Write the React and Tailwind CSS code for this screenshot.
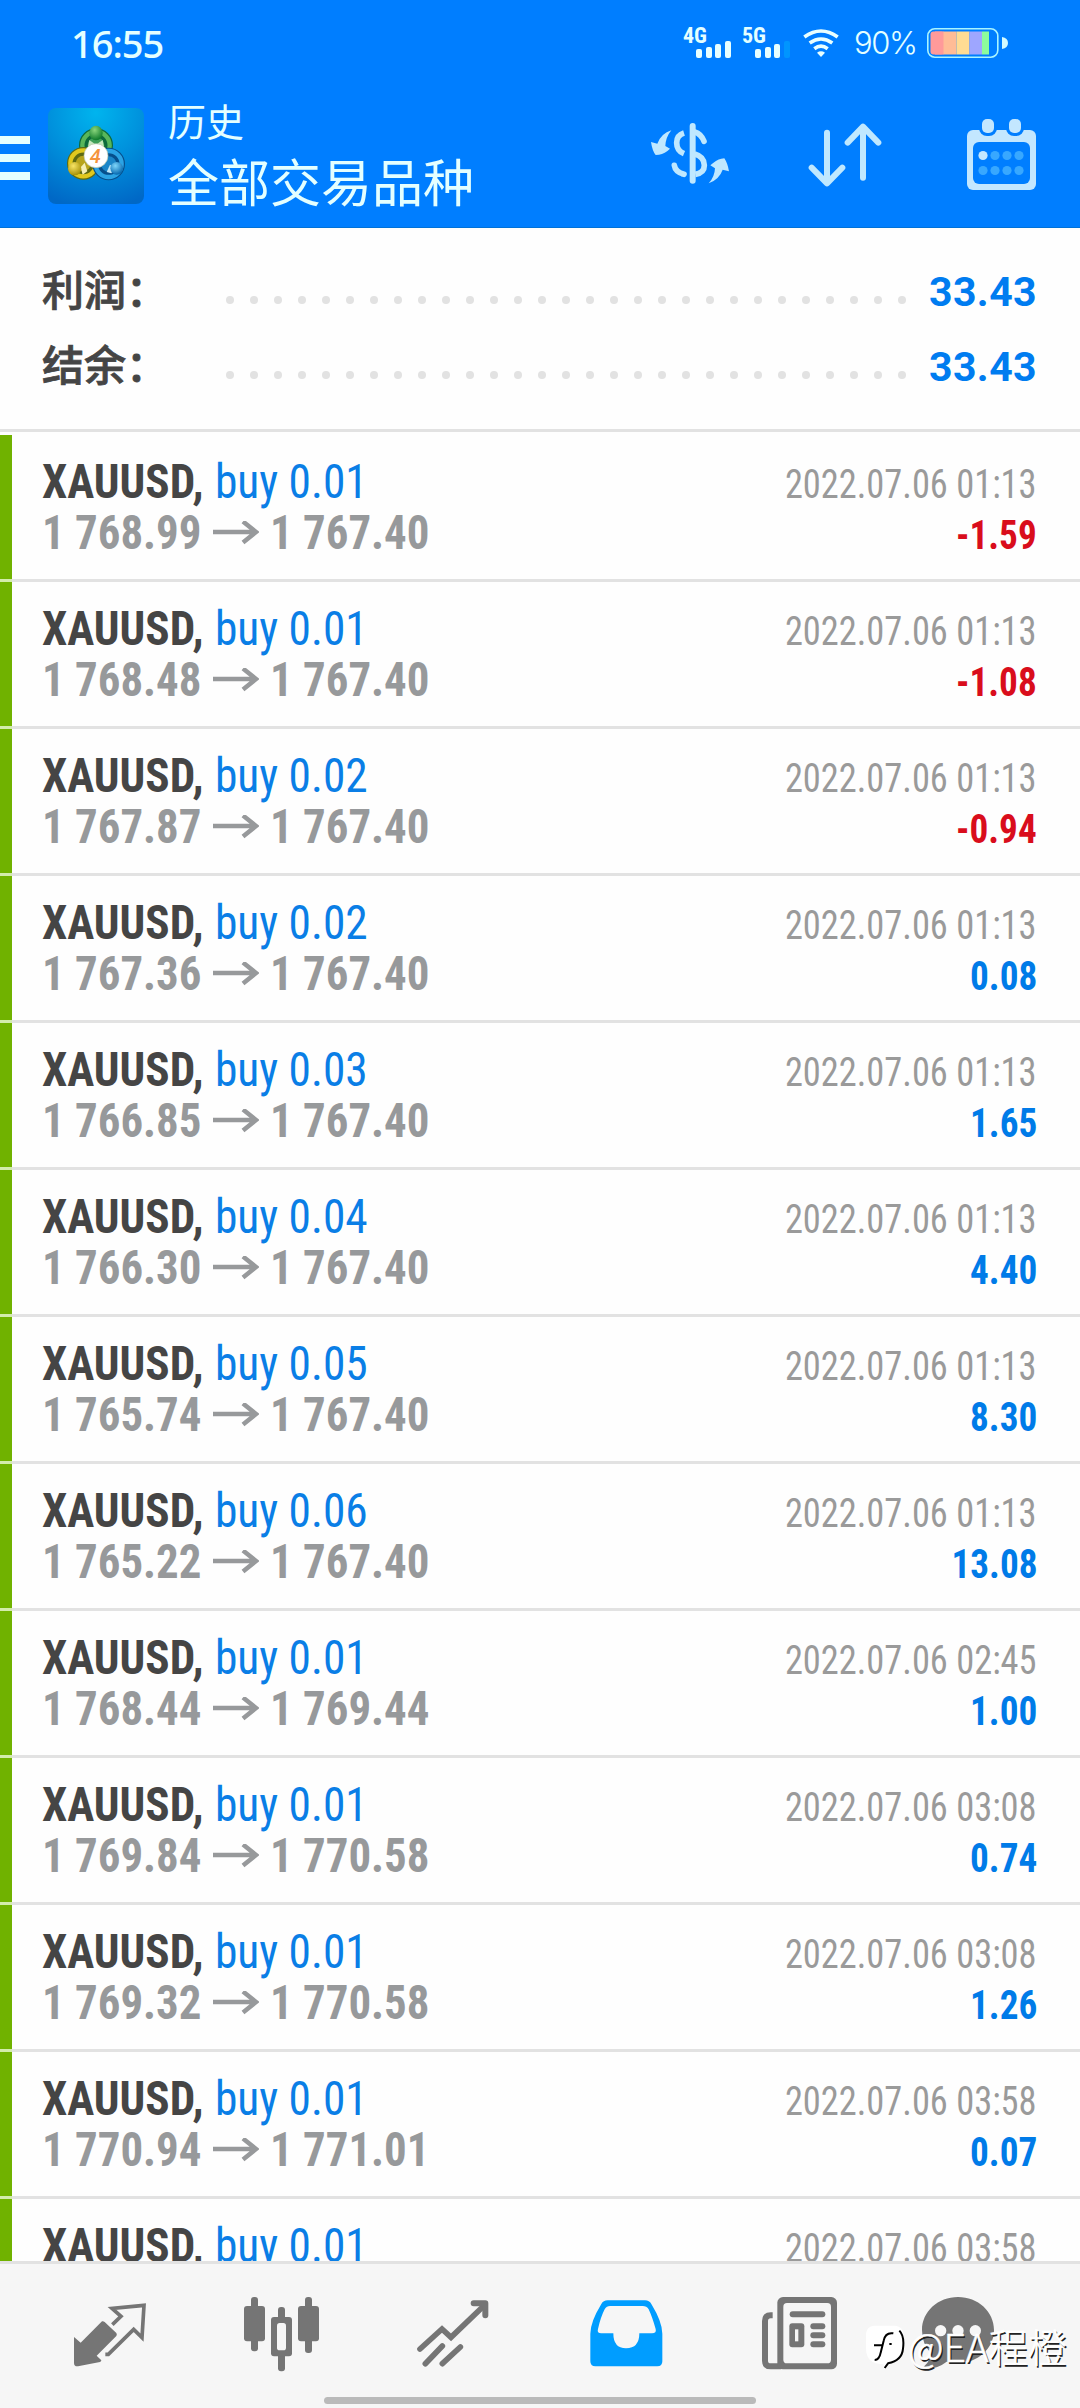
const deals = [
  { lot: '0.01', open: '1 768.99', close: '1 767.40', time: '2022.07.06 01:13', profit: '-1.59' },
  { lot: '0.01', open: '1 768.48', close: '1 767.40', time: '2022.07.06 01:13', profit: '-1.08' },
  { lot: '0.02', open: '1 767.87', close: '1 767.40', time: '2022.07.06 01:13', profit: '-0.94' },
  { lot: '0.02', open: '1 767.36', close: '1 767.40', time: '2022.07.06 01:13', profit: '0.08' },
  { lot: '0.03', open: '1 766.85', close: '1 767.40', time: '2022.07.06 01:13', profit: '1.65' },
  { lot: '0.04', open: '1 766.30', close: '1 767.40', time: '2022.07.06 01:13', profit: '4.40' },
  { lot: '0.05', open: '1 765.74', close: '1 767.40', time: '2022.07.06 01:13', profit: '8.30' },
  { lot: '0.06', open: '1 765.22', close: '1 767.40', time: '2022.07.06 01:13', profit: '13.08' },
  { lot: '0.01', open: '1 768.44', close: '1 769.44', time: '2022.07.06 02:45', profit: '1.00' },
  { lot: '0.01', open: '1 769.84', close: '1 770.58', time: '2022.07.06 03:08', profit: '0.74' },
  { lot: '0.01', open: '1 769.32', close: '1 770.58', time: '2022.07.06 03:08', profit: '1.26' },
  { lot: '0.01', open: '1 770.94', close: '1 771.01', time: '2022.07.06 03:58', profit: '0.07' },
  { lot: '0.01', open: '', close: '', time: '2022.07.06 03:58', profit: '' },
]

function Signal({ label, weak }) {
  return (
    <div className="w-[49px] h-8 relative">
      <span className="absolute left-0 -top-[3px] font-['Roboto_Condensed'] font-bold text-[22px] leading-[22px]">{label}</span>
      <svg className="absolute right-0 bottom-[2px]" width="37" height="17" viewBox="0 0 37 17" fill="#e8ffff">
        <rect x="1" y="8" width="6" height="9" rx="2" />
        <rect x="11" y="6" width="6" height="11" rx="2" />
        <rect x="20" y="3" width="6" height="14" rx="2" />
        <rect x="30" y="0" width="6" height="17" rx="2" fill={weak ? '#0095ff' : '#e8ffff'} />
      </svg>
    </div>
  )
}

function Wifi() {
  return (
    <svg width="36" height="29" viewBox="0 0 108 87" fill="none" stroke="#e8ffff" strokeWidth="11">
      <path d="M4 24 Q54 -12 104 24" />
      <path d="M20 42 Q54 18 88 42" />
      <path d="M34 59 Q54 44 74 59" />
      <path d="M42 71 Q54 63 66 71 L54 84Z" fill="#e8ffff" stroke="none" />
    </svg>
  )
}

function Battery() {
  return (
    <svg width="82" height="30" viewBox="0 0 82 30">
      <rect x="0.8" y="0.8" width="70" height="28.4" rx="7" fill="none" stroke="#a8f4ff" strokeWidth="1.6" />
      <rect x="3.5" y="3.5" width="14" height="23" rx="3" fill="#ff9a9a" />
      <rect x="8" y="3.5" width="9" height="23" fill="#ff9a9a" />
      <rect x="16.5" y="3.5" width="13" height="23" fill="#ffbc96" />
      <rect x="29.5" y="3.5" width="13" height="23" fill="#ffdc93" />
      <rect x="42.5" y="3.5" width="12.5" height="23" fill="#9ea6ff" />
      <rect x="55" y="3.5" width="7" height="23" fill="#8dfc9c" />
      <path d="M75 9 Q81 10 81 15 Q81 20 75 21Z" fill="#d4fbff" />
    </svg>
  )
}

function AppIcon() {
  return (
    <svg width="96" height="96" viewBox="0 0 288 288">
      <defs>
        <radialGradient id="tile" cx="0.5" cy="0.05" r="1">
          <stop offset="0" stopColor="#00b4ee" />
          <stop offset="0.5" stopColor="#0090dc" />
          <stop offset="1" stopColor="#0068c6" />
        </radialGradient>
        <radialGradient id="green" cx="0.4" cy="0.3" r="0.7">
          <stop offset="0" stopColor="#8ad67c" />
          <stop offset="1" stopColor="#0e7a2a" />
        </radialGradient>
        <radialGradient id="yellow" cx="0.4" cy="0.3" r="0.7">
          <stop offset="0" stopColor="#f8e465" />
          <stop offset="1" stopColor="#a89208" />
        </radialGradient>
        <radialGradient id="cyan" cx="0.4" cy="0.3" r="0.7">
          <stop offset="0" stopColor="#7fd6fa" />
          <stop offset="1" stopColor="#0568b0" />
        </radialGradient>
      </defs>
      <rect width="288" height="288" rx="24" fill="url(#tile)" />
      <circle cx="144" cy="112" r="38" fill="#3f9f58" stroke="#0d6a3c" strokeWidth="26" />
      <circle cx="144" cy="112" r="41" fill="none" stroke="#58b65a" strokeWidth="13" />
      <circle cx="106" cy="166" r="36" fill="#b7a41c" stroke="#5e6a12" strokeWidth="26" />
      <circle cx="106" cy="166" r="39" fill="none" stroke="#e0c81e" strokeWidth="13" />
      <circle cx="182" cy="168" r="36" fill="#1b86c8" stroke="#064f8c" strokeWidth="26" />
      <circle cx="182" cy="168" r="39" fill="none" stroke="#2ba3e4" strokeWidth="13" />
      <path d="M124 96 L144 110 L164 96 L168 116 L120 116Z" fill="#c4e6bd" />
      <path d="M98 178 L110 164 L118 190 L104 200Z" fill="#f4eeb4" />
      <path d="M186 170 L200 180 L190 196 L176 192Z" fill="#bfe6f8" />
      <ellipse cx="144" cy="75" rx="20" ry="22" fill="url(#green)" />
      <circle cx="80" cy="182" r="20" fill="url(#yellow)" />
      <circle cx="206" cy="181" r="19" fill="url(#cyan)" />
      <circle cx="144" cy="143" r="36" fill="#fff" stroke="#b6c2a8" strokeWidth="2" />
      <text x="142" y="165" textAnchor="middle" fontFamily="Roboto" fontWeight="500" fontStyle="italic" fontSize="60" fill="#f5943c">4</text>
    </svg>
  )
}

function CurrencyIcon() {
  return (
    <svg width="80" height="64" viewBox="30 38 240 192" fill="none" stroke="#bfe8ff" strokeWidth="17">
      <path d="M158 50V214" strokeWidth="18" strokeLinecap="round" />
      <path d="M132 71 Q110 78 110 100 Q110 124 132 133" />
      <path d="M103 168 Q106 188 132 195" strokeLinecap="round" />
      <path d="M123 188h9v13h-9z" fill="#bfe8ff" stroke="none" />
      <path d="M164 68 Q184 74 192 96" strokeLinecap="round" />
      <path d="M164 134 Q193 142 193 168 Q193 191 166 195" />
      <path d="M94 63 Q64 72 52 103 L33 98 Q37 125 47 137 L57 136 Q75 133 90 118 L76 110 Q77 84 94 63Z" fill="#bfe8ff" stroke="none" />
      <path d="M206 222 Q224 203 225 177 L211 168 Q228 151 244 148 L253 147 Q263 162 267 186 L248 181 Q238 210 206 222Z" fill="#bfe8ff" stroke="none" />
    </svg>
  )
}

function SortIcon() {
  return (
    <svg width="74" height="64" viewBox="507 40 222 192" fill="none" stroke="#bfe8ff" strokeWidth="18" strokeLinecap="round" strokeLinejoin="round">
      <path d="M564 69V220M518 174L564 221L610 174" />
      <path d="M672 204V52M626 99L672 51L718 99" />
    </svg>
  )
}

function CalendarIcon() {
  return (
    <svg width="69" height="71" viewBox="0 0 69 71">
      <rect y="11" width="69" height="60" rx="6" fill="#c3e7ff" />
      <rect x="6" y="23" width="57" height="42" rx="6" fill="#007eff" />
      <rect x="12" y="-3" width="18" height="20" rx="8" fill="#007eff" />
      <rect x="39" y="-3" width="18" height="20" rx="8" fill="#007eff" />
      <rect x="15" y="0" width="12" height="14" rx="5" fill="#c3e7ff" />
      <rect x="42" y="0" width="12" height="14" rx="5" fill="#c3e7ff" />
      {[16, 28, 40, 52].map(x => (
        <g key={x}>
          <circle cx={x} cy="36.5" r="4.6" fill={x === 16 ? '#c3e7ff' : '#38a8ff'} />
          <circle cx={x} cy="51.5" r="4.6" fill="#38a8ff" />
        </g>
      ))}
    </svg>
  )
}

function SummaryRow({ label, value }) {
  return (
    <div className="h-[75px] flex items-center pl-[42px] pr-[43px]">
      <div className="w-[184px] -mt-2 text-[42px] leading-[60px] font-medium text-[#454545] [-webkit-text-stroke:0.8px_#454545] font-['Noto_Sans_CJK_SC',sans-serif]">{label}</div>
      <div className="w-[680px] flex justify-between mt-4">
        {Array.from({ length: 29 }, (_, i) => <span key={i} className="w-2 h-2 rounded-full bg-[#e2e2e2]" />)}
      </div>
      <div className="ml-auto text-[41px] leading-[48px] font-bold tracking-[0.4px] text-[#007cf0]">{value}</div>
    </div>
  )
}

function DealRow({ deal }) {
  return (
    <div className="h-[147px] shrink-0 border-l-12 border-l-[#70b200]">
      <div className="h-36 pt-[21px] pl-[30px] pr-[43px] font-['Roboto_Condensed',sans-serif] text-[48px] leading-[51px] whitespace-nowrap">
        <div className="h-[51px] flex items-baseline">
          <span className="w-[173px] font-bold text-[#454545] origin-left scale-x-[0.94]">XAUUSD,</span>
          <span className="text-[#0a7ee6] origin-left scale-x-[0.945]">buy {deal.lot}</span>
          <span className="ml-auto text-[40px] text-[#9a9a9a] origin-right scale-x-[0.91]">{deal.time}</span>
        </div>
        <div className="h-[51px] flex items-baseline font-bold text-[#97999b]">
          <span className="w-[171px] origin-left scale-x-[0.935]">{deal.open}</span>
          {deal.open && (
            <svg className="w-[46px] h-6 mr-[11px] self-center" viewBox="0 0 46 24" fill="none" stroke="#97999b" strokeWidth="4.5">
              <path d="M0 11H43M30 0.5L43 11L30 21.5" />
            </svg>
          )}
          <span className="origin-left scale-x-[0.935]">{deal.close}</span>
          <span className={`ml-auto text-[40px] origin-right scale-x-[0.93] ${deal.profit.startsWith('-') ? 'text-[#d90d1c]' : 'text-[#007be8]'}`}>{deal.profit}</span>
        </div>
      </div>
      <div className="-ml-3 h-[3px] bg-[#e2e2e2]">
        <div className="w-3 h-[3px] bg-[#d3ecac]" />
      </div>
    </div>
  )
}

export default function App() {
  return (
    <div className="w-[1080px] h-[2408px] flex flex-col overflow-hidden bg-[#fefefe] font-[Roboto,sans-serif]">
      <header className="h-[228px] shrink-0 bg-[#007eff] border-b border-[#0072d8] text-[#e4ffff]">
        <div className="h-[87px] flex items-center pl-[71px]">
          <div className="w-[612px] text-[38px] font-medium font-['Noto_Sans',sans-serif] tracking-[-1px]">16:55</div>
          <Signal label="4G" />
          <div className="ml-[10px]"><Signal label="5G" weak /></div>
          <div className="ml-3"><Wifi /></div>
          <div className="ml-[15px] w-[73px] text-[31px] font-light font-[Inter,sans-serif] tracking-[-1.4px]">90%</div>
          <div className="-mt-[2px]"><Battery /></div>
        </div>
        <div className="flex">
          <div className="w-[30px] mt-[49px] flex flex-col gap-[10px]">
            <span className="h-2 bg-[#e4ffff]" />
            <span className="h-2 bg-[#e4ffff]" />
            <span className="h-2 bg-[#e4ffff]" />
          </div>
          <div className="ml-[18px] mt-[21px]"><AppIcon /></div>
          <div className="ml-6 mt-[9px] w-[482px] font-['Noto_Sans_CJK_SC',sans-serif]">
            <div className="text-[38px] leading-[48px]">历史</div>
            <div className="text-[51px] leading-[72px]">全部交易品种</div>
          </div>
          <div className="mt-[35px]"><CurrencyIcon /></div>
          <div className="ml-[78px] mt-9"><SortIcon /></div>
          <div className="ml-[85px] mt-8"><CalendarIcon /></div>
        </div>
      </header>

      <section className="h-[204px] shrink-0 pt-[26px] border-b-3 border-[#e2e2e2]">
        <SummaryRow label="利润：" value="33.43" />
        <SummaryRow label="结余：" value="33.43" />
      </section>

      <main className="h-[1829px] shrink-0 pt-[3px] flex flex-col overflow-hidden">
        {deals.map((deal, i) => <DealRow key={i} deal={deal} />)}
      </main>

      <nav className="relative h-[147px] shrink-0 bg-[#f6f6f6] border-t-3 border-[#e2e2e2]">
        <div className="flex pl-[74px] pt-[33px]">
          <svg width="72" height="75" viewBox="42 50 216 225" fill="none" stroke="#757575" strokeWidth="11">
            <path d="M42 170L62 187L126 123Q130 122 134 125L169 158Q172 163 169 167L110 226L124 240Q124 244 120 245L54 258Q42 259 42 248Z" fill="#757575" stroke="none" />
            <path d="M157 133L183 108L156 84L252 75L246 172L221 147L145 222H136" />
          </svg>
          <svg className="ml-[98px]" width="75" height="75" viewBox="552 50 225 225" fill="#757575">
            <rect x="573" y="50" width="21" height="163" rx="9" />
            <rect x="552" y="77" width="63" height="106" rx="9" />
            <rect x="735" y="50" width="21" height="168" rx="9" />
            <rect x="714" y="77" width="63" height="106" rx="9" />
            <rect x="654" y="80" width="21" height="193" rx="9" />
            <rect x="633" y="110" width="63" height="118" rx="9" />
            <rect x="651" y="128" width="27" height="82" rx="8" fill="#f6f6f6" />
          </svg>
          <svg className="ml-[98px]" width="72" height="75" viewBox="1073 50 216 225" fill="none" stroke="#757575" strokeWidth="17" strokeLinecap="round">
            <path d="M1082 206L1148 146L1175 171L1276 74" />
            <path d="M1243 69H1278V105" strokeWidth="18" strokeLinejoin="round" />
            <path d="M1098 250L1149 197M1149 250L1203 200" />
          </svg>
          <svg className="ml-[101px]" width="73" height="75" viewBox="30 50 219 225">
            <path d="M83 60H195Q208 60 214 71Q247 125 247 160V243Q247 258 232 258H46Q31 258 31 243V160Q31 125 64 71Q70 60 83 60Z" fill="#009dff" />
            <path d="M90 77H188Q200 77 206 87Q216 108 227 146Q230 159 216 159H178Q178 204 138 204Q100 204 100 159H64Q50 159 54 146Q62 110 74 87Q80 77 90 77Z" fill="#f6f6f6" />
          </svg>
          <svg className="ml-[99px]" width="75" height="75" viewBox="547 50 225 225" fill="#757575">
            <path d="M579 105H573Q556 105 556 122V241Q556 258 573 258H604" fill="none" stroke="#757575" strokeWidth="18" />
            <rect x="593" y="50" width="179" height="217" rx="17" />
            <rect x="611" y="68" width="143" height="181" rx="11" fill="#f6f6f6" />
            <rect x="630" y="93" width="107" height="18" rx="9" />
            <rect x="629" y="129" width="45" height="72" rx="9" />
            <rect x="646" y="147" width="10" height="36" fill="#f6f6f6" />
            <rect x="692" y="129" width="45" height="18" rx="9" />
            <rect x="692" y="156" width="45" height="18" rx="9" />
            <rect x="692" y="183" width="45" height="18" rx="9" />
          </svg>
          <svg className="ml-[85px]" width="72" height="75" viewBox="216 50 216 225">
            <path d="M324 50C384 50 432 94 432 149S384 248 324 248Q304 248 290 244Q260 268 218 266Q216 262 224 256Q240 244 242 218Q216 190 216 149C216 94 264 50 324 50Z" fill="#757575" />
            <circle cx="272" cy="151" r="17" fill="#f6f6f6" />
            <circle cx="324" cy="151" r="17" fill="#f6f6f6" />
            <circle cx="376" cy="151" r="17" fill="#f6f6f6" />
          </svg>
        </div>

        {/* author watermark */}
        <div className="absolute left-[866px] top-[61px] flex items-start">
          <svg width="39" height="45" viewBox="48 143 117 135">
            <path d="M72 145H136Q160 148 160 172V212Q158 254 112 262L104 274L100 260Q48 262 48 212V168Q50 148 72 145Z" fill="#fff" />
            <path d="M130 168Q106 164 101 190L92 226Q88 248 74 248M72 204H100M148 160Q164 176 159 214Q156 250 114 258L104 272M118 200H125" fill="none" stroke="#000" strokeWidth="6" />
          </svg>
          <span className="ml-[3px] -mt-[2px] text-[39px] leading-[44px] font-light text-white font-['Noto_Sans_CJK_SC',sans-serif] whitespace-nowrap [-webkit-text-stroke:0.6px_#fff] [text-shadow:1.5px_1.5px_0_#222]">@EA程橙</span>
        </div>

        <div className="absolute left-[324px] top-[133px] w-[432px] h-[7px] rounded-full bg-[#bababa]" />
      </nav>
    </div>
  )
}
